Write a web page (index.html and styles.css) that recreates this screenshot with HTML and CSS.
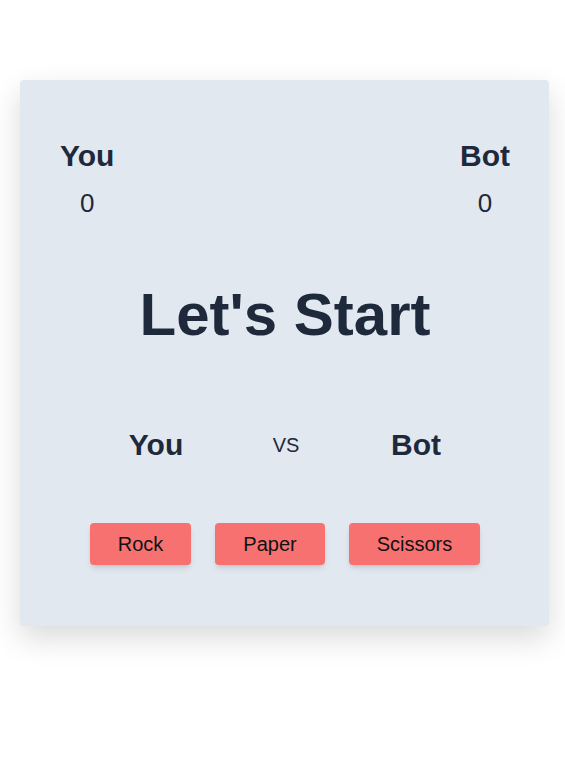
FILE: index.html
```html
<!DOCTYPE html>
<html lang="en">
<head>
<meta charset="utf-8">
<title>Rock Paper Scissors</title>
<link rel="stylesheet" href="styles.css">
</head>
<body>
<main class="card">
  <section class="scores">
    <div class="score">
      <h2 class="score-name">You</h2>
      <div class="score-value">0</div>
    </div>
    <div class="score">
      <h2 class="score-name">Bot</h2>
      <div class="score-value">0</div>
    </div>
  </section>
  <h1 class="status">Let's Start</h1>
  <section class="versus">
    <div class="player">You</div>
    <div class="vs">vs</div>
    <div class="player">Bot</div>
  </section>
  <section class="choices">
    <button class="choice">Rock</button>
    <button class="choice">Paper</button>
    <button class="choice">Scissors</button>
  </section>
</main>
</body>
</html>
```

FILE: styles.css
```css
* { box-sizing: border-box; }
html, body { margin: 0; padding: 0; background: #ffffff; }
body {
  font-family: "Liberation Sans", Arial, sans-serif;
  color: #1e293b;
  min-height: 780px;
  padding: 80px 16px 80px 20px;
}
.card {
  width: 529px;
  height: 546px;
  background: #e2e8f0;
  border-radius: 4px;
  box-shadow: 0 12px 30px rgba(0, 0, 0, 0.15);
  padding: 58px 39px 0 40px;
}
.scores {
  display: flex;
  justify-content: space-between;
}
.score {
  display: flex;
  flex-direction: column;
  align-items: center;
}
.score-name {
  margin: 0;
  font-size: 30px;
  line-height: 36px;
  font-weight: 700;
}
.score-value {
  margin-top: 13px;
  font-size: 26px;
  line-height: 32px;
}
.status {
  margin: 66px 0 0;
  text-align: center;
  font-size: 60px;
  line-height: 60px;
  font-weight: 700;
}
.versus {
  margin-top: 82px;
  display: grid;
  grid-template-columns: repeat(3, 130px);
  justify-content: center;
  align-items: center;
  text-align: center;
  padding-left: 2px;
}
.player {
  font-size: 30px;
  line-height: 36px;
  font-weight: 700;
}
.vs {
  font-size: 20px;
  line-height: 36px;
  text-transform: uppercase;
}
.choices {
  margin-top: 60px;
  display: flex;
  justify-content: center;
  gap: 24px;
}
.choice {
  font-family: "Liberation Sans", Arial, sans-serif;
  font-size: 20px;
  line-height: 42px;
  height: 42px;
  padding: 0 28px;
  border: 0;
  border-radius: 4px;
  background: #f87171;
  color: #111111;
  box-shadow: 0 4px 6px -1px rgba(0, 0, 0, 0.1), 0 2px 4px -2px rgba(0, 0, 0, 0.1);
}
```
